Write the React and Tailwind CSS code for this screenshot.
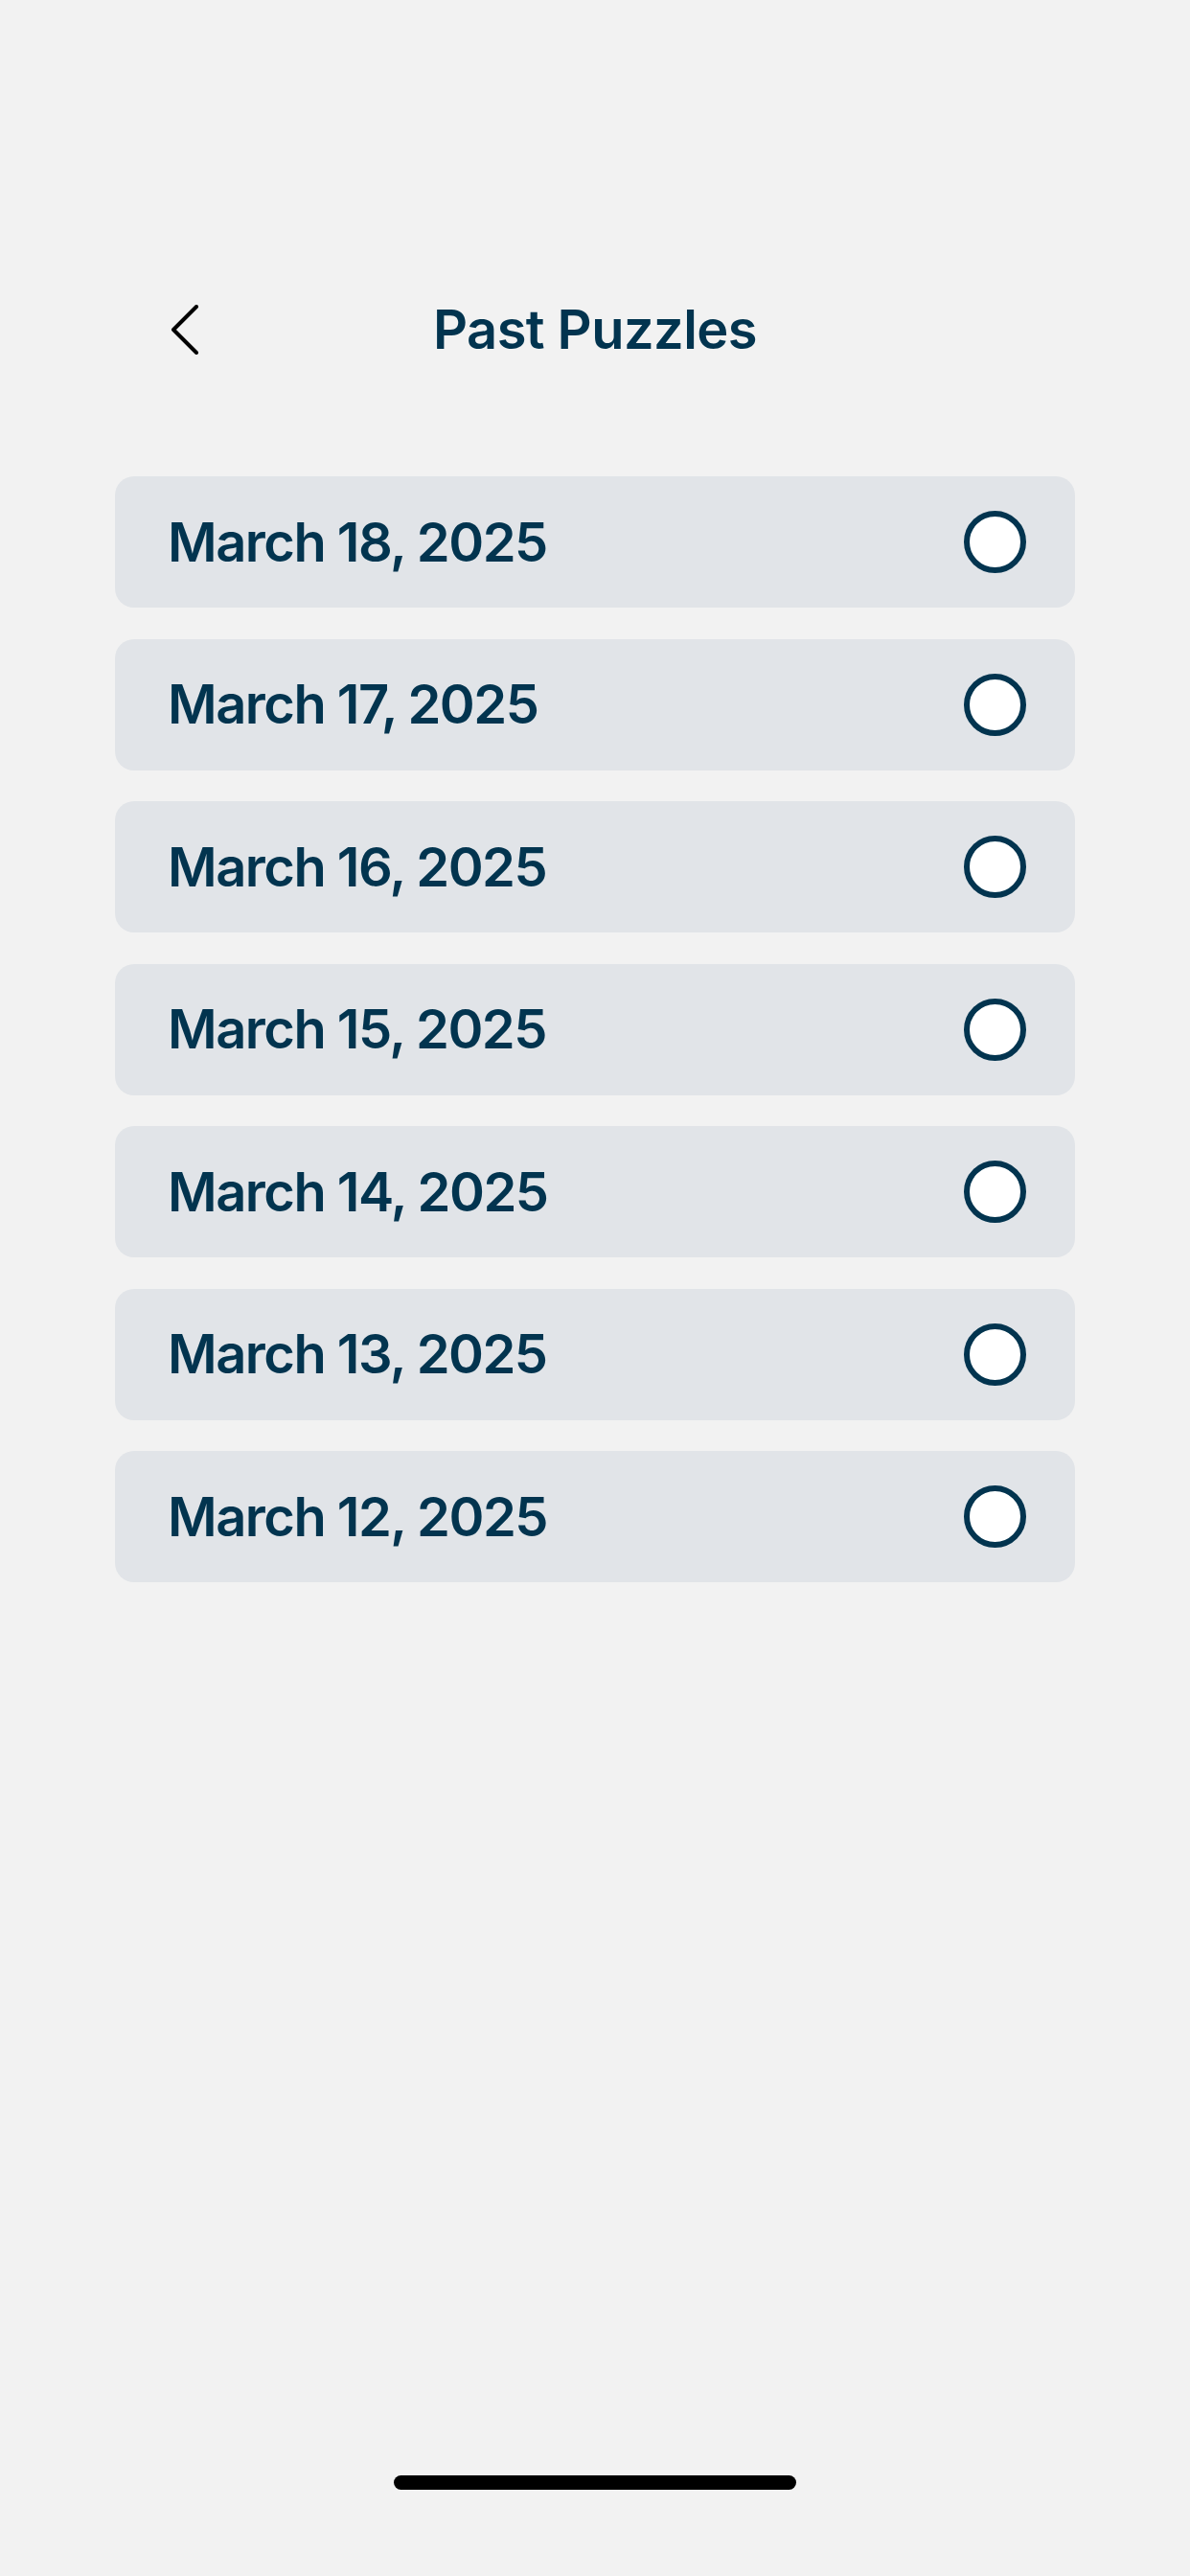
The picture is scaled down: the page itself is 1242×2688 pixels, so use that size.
import React from 'react';

const dates = [
    'March 18, 2025',
    'March 17, 2025',
    'March 16, 2025',
    'March 15, 2025',
    'March 14, 2025',
    'March 13, 2025',
    'March 12, 2025',
];

const PuzzleRow = ({ date }) => (
    <div className="h-[137px] rounded-[20px] bg-[#e1e4e8] pl-[55px] pr-[51px] flex items-center justify-between">
        <span className="text-[56px] font-semibold tracking-[-0.027em] text-[#02344f] leading-none">{date}</span>
        <span className="w-[65px] h-[65px] rounded-full bg-white border-[6px] border-[#02344f]" />
    </div>
);

export default function App() {
    return (
        <div className="min-h-[2688px] bg-[#f2f2f2] flex flex-col" style={{ fontFamily: 'Inter, "Noto Sans", sans-serif' }}>
            <div className="pt-[294px] px-[120px]">
                <div className="h-[100px] flex items-center justify-center relative">
                    <button className="absolute left-[58px] top-1/2 -translate-y-1/2 p-0">
                        <svg width="30" height="52" viewBox="0 0 30 52" fill="none">
                            <path d="M27 2 L3 26 L27 50" stroke="#000" strokeWidth="4" strokeLinecap="round" strokeLinejoin="round" />
                        </svg>
                    </button>
                    <h1 className="text-[56px] font-semibold tracking-[-0.01em] text-[#02344f] leading-none">Past Puzzles</h1>
                </div>
            </div>

            <div className="mt-[103px] px-[120px] flex flex-col gap-[32.5px]">
                {dates.map(d => <PuzzleRow key={d} date={d} />)}
            </div>

            <div className="mt-auto pb-[90px] flex justify-center">
                <div className="w-[420px] h-[15px] rounded-full bg-black" />
            </div>
        </div>
    );
}
